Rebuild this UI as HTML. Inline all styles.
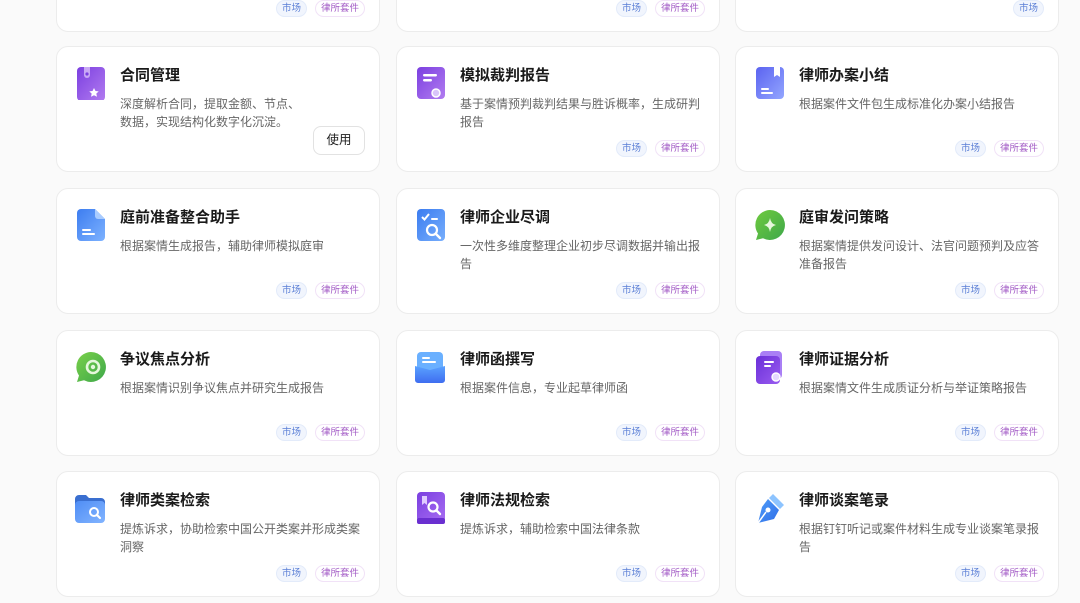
<!DOCTYPE html>
<html><head><meta charset="utf-8"><style>
*{margin:0;padding:0;box-sizing:border-box}
body{width:1080px;height:603px;overflow:hidden;background:#fafafa;font-family:"Liberation Sans","Noto Sans CJK SC",sans-serif;position:relative}
.c{position:absolute;width:324px;height:126px;background:#fff;border:1px solid #ececec;border-radius:12px}
.ic{position:absolute;left:19px;top:19px;width:30px;height:34px}
.t{position:absolute;left:63px;top:19px;font-size:15px;font-weight:bold;color:#1a1a1a;line-height:20px}
.d{position:absolute;left:63px;top:48px;width:246px;font-size:12px;color:#666;line-height:18px}
.tg{position:absolute;bottom:14px;height:17px;border-radius:9px;font-size:9.5px;line-height:15px;padding:0 5px;border:1px solid}
.m{right:72px;color:#5b7fd6;background:#f1f5fd;border-color:#e3ebfa}
.l{right:14px;color:#a35bc6;background:#fff;border-color:#f1e2f7}
.btn{position:absolute;right:14px;bottom:16px;width:52px;height:29px;border:1px solid #e2e2e2;border-radius:8px;background:#fff;font-size:12.5px;color:#222;text-align:center;line-height:27px}
</style></head><body>

<div class="c" style="left:56px;top:-94px"><span class="tg m">市场</span><span class="tg l">律所套件</span></div>
<div class="c" style="left:396px;top:-94px"><span class="tg m">市场</span><span class="tg l">律所套件</span></div>
<div class="c" style="left:735px;top:-94px"><span class="tg l" style="color:#5b7fd6;background:#f1f5fd;border-color:#e3ebfa">市场</span></div>

<div class="c" style="left:56px;top:46px">
<svg class="ic" viewBox="0 0 30 34"><defs><linearGradient id="g1" x1="0" y1="0" x2="1" y2="1"><stop offset="0" stop-color="#7b3fe0"/><stop offset="1" stop-color="#b27cf0"/></linearGradient></defs><rect x="1" y="1" width="28" height="34" rx="4" fill="url(#g1)"/><path d="M8 1v8a3 3 0 0 0 6 0V1z" fill="#c9a8f5"/><circle cx="11" cy="8" r="1.6" fill="#7b3fe0"/><path d="M18 22l1.5 3 3.2.4-2.4 2.2.7 3.2-3-1.6-3 1.6.7-3.2-2.4-2.2 3.2-.4z" fill="#fff"/></svg>
<div class="t">合同管理</div><div class="d" style="width:184px">深度解析合同，提取金额、节点、数据，实现结构化数字化沉淀。</div><div class="btn">使用</div></div>

<div class="c" style="left:396px;top:46px">
<svg class="ic" viewBox="0 0 30 34"><defs><linearGradient id="g2" x1="0" y1="0" x2="1" y2="1"><stop offset="0" stop-color="#7b3fe0"/><stop offset="1" stop-color="#b17cf0"/></linearGradient></defs><rect x="1" y="1" width="28" height="32" rx="4" fill="url(#g2)"/><rect x="7" y="8" width="14" height="2.5" rx="1.2" fill="#fff"/><rect x="7" y="13" width="9" height="2.5" rx="1.2" fill="#fff"/><circle cx="20" cy="27" r="4" fill="#d9c4fa" stroke="#fff" stroke-width="1.5"/></svg>
<div class="t">模拟裁判报告</div><div class="d">基于案情预判裁判结果与胜诉概率，生成研判报告</div><span class="tg m">市场</span><span class="tg l">律所套件</span></div>

<div class="c" style="left:735px;top:46px">
<svg class="ic" viewBox="0 0 30 34"><defs><linearGradient id="g3" x1="0" y1="0" x2="1" y2="1"><stop offset="0" stop-color="#5b63f0"/><stop offset="1" stop-color="#93a6ff"/></linearGradient></defs><rect x="1" y="1" width="28" height="32" rx="4" fill="url(#g3)"/><path d="M19 1h6v10l-3-2-3 2z" fill="#fff"/><rect x="6" y="22" width="8" height="2" rx="1" fill="#fff"/><rect x="6" y="26" width="12" height="2" rx="1" fill="#fff"/></svg>
<div class="t">律师办案小结</div><div class="d">根据案件文件包生成标准化办案小结报告</div><span class="tg m">市场</span><span class="tg l">律所套件</span></div>

<div class="c" style="left:56px;top:188px">
<svg class="ic" viewBox="0 0 30 34"><defs><linearGradient id="g4" x1="0" y1="0" x2="1" y2="1"><stop offset="0" stop-color="#3d7df0"/><stop offset="1" stop-color="#7db2ff"/></linearGradient></defs><path d="M5 1h14l10 10v18a4 4 0 0 1-4 4H5a4 4 0 0 1-4-4V5a4 4 0 0 1 4-4z" fill="url(#g4)"/><path d="M19 1v7a3 3 0 0 0 3 3h7z" fill="#a9ccff"/><rect x="6" y="21" width="9" height="2" rx="1" fill="#fff"/><rect x="6" y="25" width="13" height="2" rx="1" fill="#fff"/></svg>
<div class="t">庭前准备整合助手</div><div class="d">根据案情生成报告，辅助律师模拟庭审</div><span class="tg m">市场</span><span class="tg l">律所套件</span></div>

<div class="c" style="left:396px;top:188px">
<svg class="ic" viewBox="0 0 30 34"><defs><linearGradient id="g5" x1="0" y1="0" x2="1" y2="1"><stop offset="0" stop-color="#3b7cf0"/><stop offset="1" stop-color="#77aefc"/></linearGradient></defs><rect x="1" y="1" width="28" height="32" rx="4" fill="url(#g5)"/><path d="M6 9l2.5 2.5L13 6" stroke="#fff" stroke-width="2" fill="none"/><rect x="15" y="10" width="7" height="2" rx="1" fill="#fff"/><circle cx="16" cy="22" r="5" stroke="#fff" stroke-width="2.2" fill="none"/><path d="M20 26l4 4" stroke="#fff" stroke-width="2.4" stroke-linecap="round"/></svg>
<div class="t">律师企业尽调</div><div class="d">一次性多维度整理企业初步尽调数据并输出报告</div><span class="tg m">市场</span><span class="tg l">律所套件</span></div>

<div class="c" style="left:735px;top:188px">
<svg class="ic" viewBox="0 0 34 34" style="width:34px;left:17px"><defs><linearGradient id="g6" x1="0" y1="0" x2="1" y2="1"><stop offset="0" stop-color="#6fca3e"/><stop offset="1" stop-color="#3ea84a"/></linearGradient></defs><path d="M17 2a15 15 0 1 1-7 28.3L3 32l2-6.5A15 15 0 0 1 17 2z" fill="url(#g6)"/><path d="M17 10q1 6 6 7q-5 1-6 7q-1-6-6-7q5-1 6-7z" fill="#e6f7dc"/></svg>
<div class="t">庭审发问策略</div><div class="d">根据案情提供发问设计、法官问题预判及应答准备报告</div><span class="tg m">市场</span><span class="tg l">律所套件</span></div>

<div class="c" style="left:56px;top:330px">
<svg class="ic" viewBox="0 0 34 34" style="width:34px;left:17px"><defs><linearGradient id="g7" x1="0" y1="0" x2="1" y2="1"><stop offset="0" stop-color="#7ad04a"/><stop offset="1" stop-color="#3ea84a"/></linearGradient></defs><path d="M17 2a15 15 0 1 1-7 28.3L3 32l2-6.5A15 15 0 0 1 17 2z" fill="url(#g7)"/><circle cx="19" cy="17" r="6" fill="none" stroke="#e6f7dc" stroke-width="2.6"/><circle cx="19" cy="17" r="2.2" fill="#e6f7dc"/></svg>
<div class="t">争议焦点分析</div><div class="d">根据案情识别争议焦点并研究生成报告</div><span class="tg m">市场</span><span class="tg l">律所套件</span></div>

<div class="c" style="left:396px;top:330px">
<svg class="ic" viewBox="0 0 32 34" style="width:32px;left:17px"><defs><linearGradient id="g8" x1="0" y1="0" x2="0" y2="1"><stop offset="0" stop-color="#5aa2ff"/><stop offset="1" stop-color="#3f6df0"/></linearGradient></defs><rect x="3" y="2" width="26" height="20" rx="4" fill="#6ab0ff"/><rect x="8" y="7" width="8" height="2" rx="1" fill="#fff"/><rect x="8" y="11" width="14" height="2" rx="1" fill="#fff"/><path d="M1 16l15 4 15-4v14a3 3 0 0 1-3 3H4a3 3 0 0 1-3-3z" fill="url(#g8)"/></svg>
<div class="t">律师函撰写</div><div class="d">根据案件信息，专业起草律师函</div><span class="tg m">市场</span><span class="tg l">律所套件</span></div>

<div class="c" style="left:735px;top:330px">
<svg class="ic" viewBox="0 0 30 34"><defs><linearGradient id="g9" x1="0" y1="0" x2="1" y2="1"><stop offset="0" stop-color="#6a2fd8"/><stop offset="1" stop-color="#9a5cf0"/></linearGradient></defs><rect x="5" y="1" width="22" height="28" rx="4" fill="#a97ff5"/><rect x="1" y="6" width="24" height="28" rx="4" fill="url(#g9)"/><rect x="9" y="11" width="10" height="2" rx="1" fill="#fff"/><rect x="9" y="15" width="7" height="2" rx="1" fill="#fff"/><circle cx="21" cy="27" r="4" fill="#e6d8ff" stroke="#fff" stroke-width="1.4"/></svg>
<div class="t">律师证据分析</div><div class="d">根据案情文件生成质证分析与举证策略报告</div><span class="tg m">市场</span><span class="tg l">律所套件</span></div>

<div class="c" style="left:56px;top:471px">
<svg class="ic" viewBox="0 0 32 34" style="width:32px;left:17px"><defs><linearGradient id="ga" x1="0" y1="0" x2="1" y2="1"><stop offset="0" stop-color="#4f8df5"/><stop offset="1" stop-color="#82b4ff"/></linearGradient></defs><path d="M1 8a4 4 0 0 1 4-4h7l3 3h12a4 4 0 0 1 4 4v4H1z" fill="#3a6fd0"/><rect x="1" y="10" width="30" height="22" rx="4" fill="url(#ga)"/><circle cx="20" cy="21" r="4" fill="none" stroke="#fff" stroke-width="2"/><path d="M23 24l3 3" stroke="#fff" stroke-width="2.2" stroke-linecap="round"/></svg>
<div class="t">律师类案检索</div><div class="d">提炼诉求，协助检索中国公开类案并形成类案洞察</div><span class="tg m">市场</span><span class="tg l">律所套件</span></div>

<div class="c" style="left:396px;top:471px">
<svg class="ic" viewBox="0 0 30 34"><defs><linearGradient id="gb" x1="0" y1="0" x2="1" y2="1"><stop offset="0" stop-color="#7a3fe0"/><stop offset="1" stop-color="#a76cf2"/></linearGradient></defs><rect x="1" y="1" width="28" height="30" rx="4" fill="url(#gb)"/><rect x="1" y="27" width="28" height="6" rx="2" fill="#6a2fd0"/><path d="M6 5h5v9l-2.5-2-2.5 2z" fill="#e0ccff"/><circle cx="17" cy="16" r="4.5" fill="none" stroke="#fff" stroke-width="2.2"/><path d="M20.5 19.5l3.5 3.5" stroke="#fff" stroke-width="2.4" stroke-linecap="round"/></svg>
<div class="t">律师法规检索</div><div class="d">提炼诉求，辅助检索中国法律条款</div><span class="tg m">市场</span><span class="tg l">律所套件</span></div>

<div class="c" style="left:735px;top:471px">
<svg class="ic" viewBox="0 0 34 34" style="width:34px;left:17px"><defs><linearGradient id="gc" x1="0" y1="0" x2="1" y2="1"><stop offset="0" stop-color="#4f9cf8"/><stop offset="1" stop-color="#2f6ee8"/></linearGradient></defs><path d="M20 3l11 11-4 4-11-11z" fill="#8dc4ff"/><path d="M15 8l11 11-5 9-16 4 4-16z" fill="url(#gc)"/><circle cx="15" cy="19" r="2.5" fill="#fff"/><path d="M5 32l8-11" stroke="#fff" stroke-width="1.5"/></svg>
<div class="t">律师谈案笔录</div><div class="d">根据钉钉听记或案件材料生成专业谈案笔录报告</div><span class="tg m">市场</span><span class="tg l">律所套件</span></div>

</body></html>
